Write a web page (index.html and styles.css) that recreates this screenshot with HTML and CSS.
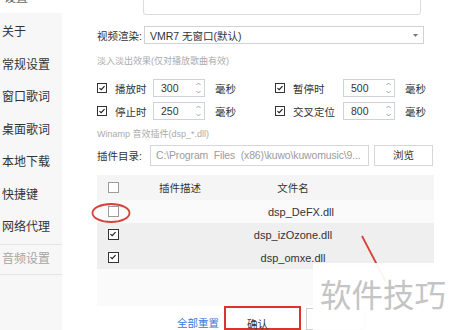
FILE: index.html
```html
<!DOCTYPE html>
<html lang="zh-CN">
<head>
	<meta charset="utf-8" />
	<title>音频设置</title>
	<link rel="stylesheet" href="styles.css">
</head>
<body>
	<div class="page">
		<aside class="sidebar">
			<div class="sidebar-title"><span>设置</span></div>
			<nav class="menu">
				<div class="menu-item">关于</div>
				<div class="menu-item">常规设置</div>
				<div class="menu-item">窗口歌词</div>
				<div class="menu-item">桌面歌词</div>
				<div class="menu-item">本地下载</div>
				<div class="menu-item">快捷键</div>
				<div class="menu-item">网络代理</div>
				<div class="menu-item menu-item--current">音频设置</div>
			</nav>
		</aside>

		<main class="panel">
			<div class="stub"></div>

			<div class="render-row">
				<span class="label">视频渲染:</span>
				<div class="select">
					<span>VMR7 无窗口(默认)</span>
					<svg class="select-arrow" width="5" height="3" viewBox="0 0 5 3"><path d="M0 0 H5 L2.5 3 Z" fill="#777"/></svg>
				</div>
			</div>

			<p class="note note--fade">淡入淡出效果(仅对播放歌曲有效)</p>

			<div class="fade-grid">
				<div class="fade-item">
					<span class="check check--on"><svg viewBox="0 0 10 10"><path d="M1.8 5.2 L4 7.2 L8.2 2.6" /></svg></span>
					<span class="fade-label">播放时</span>
					<span class="spin">300<svg class="spin-arrows" width="5" height="12" viewBox="0 0 5 12"><path d="M0.5 3 L2.5 1 L4.5 3 M0.5 9 L2.5 11 L4.5 9" /></svg></span>
					<span class="unit">毫秒</span>
				</div>
				<div class="fade-item">
					<span class="check check--on"><svg viewBox="0 0 10 10"><path d="M1.8 5.2 L4 7.2 L8.2 2.6" /></svg></span>
					<span class="fade-label fade-label--wide">暂停时</span>
					<span class="spin">500<svg class="spin-arrows" width="5" height="12" viewBox="0 0 5 12"><path d="M0.5 3 L2.5 1 L4.5 3 M0.5 9 L2.5 11 L4.5 9" /></svg></span>
					<span class="unit">毫秒</span>
				</div>
				<div class="fade-item">
					<span class="check check--on"><svg viewBox="0 0 10 10"><path d="M1.8 5.2 L4 7.2 L8.2 2.6" /></svg></span>
					<span class="fade-label">停止时</span>
					<span class="spin">250<svg class="spin-arrows" width="5" height="12" viewBox="0 0 5 12"><path d="M0.5 3 L2.5 1 L4.5 3 M0.5 9 L2.5 11 L4.5 9" /></svg></span>
					<span class="unit">毫秒</span>
				</div>
				<div class="fade-item">
					<span class="check check--on"><svg viewBox="0 0 10 10"><path d="M1.8 5.2 L4 7.2 L8.2 2.6" /></svg></span>
					<span class="fade-label fade-label--wide">交叉定位</span>
					<span class="spin">800<svg class="spin-arrows" width="5" height="12" viewBox="0 0 5 12"><path d="M0.5 3 L2.5 1 L4.5 3 M0.5 9 L2.5 11 L4.5 9" /></svg></span>
					<span class="unit">毫秒</span>
				</div>
			</div>

			<p class="note note--winamp">Winamp 音效插件(dsp_*.dll)</p>

			<div class="dir-row">
				<span class="label label--dir">插件目录:</span>
				<div class="path">C:\Program  Files  (x86)\kuwo\kuwomusic\9...</div>
				<div class="button">浏览</div>
			</div>

			<div class="plugins">
				<div class="plugins-row plugins-head">
					<span class="cell-check"><span class="check"></span></span>
					<span class="cell-desc">插件描述</span>
					<span class="cell-file">文件名</span>
				</div>
				<div class="plugins-row">
					<span class="cell-check"><span class="check"></span></span>
					<span class="cell-desc"></span>
					<span class="cell-file cell-file--shifted">dsp_DeFX.dll</span>
				</div>
				<div class="plugins-row plugins-row--on">
					<span class="cell-check"><span class="check check--on"><svg viewBox="0 0 10 10"><path d="M1.8 5.2 L4 7.2 L8.2 2.6" /></svg></span></span>
					<span class="cell-desc"></span>
					<span class="cell-file">dsp_izOzone.dll</span>
				</div>
				<div class="plugins-row plugins-row--on">
					<span class="cell-check"><span class="check check--on"><svg viewBox="0 0 10 10"><path d="M1.8 5.2 L4 7.2 L8.2 2.6" /></svg></span></span>
					<span class="cell-desc"></span>
					<span class="cell-file">dsp_omxe.dll</span>
				</div>
			</div>

			<div class="actions">
				<a class="reset" href="#">全部重置</a>
				<div class="confirm-mark"><span>确认</span></div>
				<div class="cancel"></div>
			</div>
		</main>
	</div>

	<!-- red annotations drawn over the dialog -->
	<svg class="marks" width="450" height="330" viewBox="0 0 450 330">
		<ellipse cx="111" cy="213" rx="18.5" ry="9" />
		<path d="M362 236 L386 282" />
	</svg>

	<div class="watermark">软件技巧</div>
</body>
</html>
```

FILE: styles.css
```css
* {
	box-sizing: border-box;
}
html, body {
	margin: 0;
}
body {
	position: relative;
	width: 450px;
	height: 330px;
	overflow: hidden;
	background: #fff;
	font-family: "Liberation Sans", "Noto Sans CJK SC", sans-serif;
	font-size: 10.5px;
	color: #333;
}
.page {
	display: flex;
	height: 100%;
}

/* left menu */
.sidebar {
	display: flex;
	flex-direction: column;
	flex-shrink: 0;
	width: 62px;
}
.sidebar-title {
	height: 13px;
}
.sidebar-title span {
	display: block;
	margin-top: -8px;
	padding-left: 4px;
	line-height: 12px;
	font-size: 12px;
	color: #666;
}
.menu {
	flex: 1;
	padding-top: 3px;
	background: #f7f7f7;
}
.menu-item {
	height: 32.5px;
	padding-left: 2px;
	line-height: 32.5px;
	font-size: 12px;
	color: #333;
}
.menu-item--current {
	height: 31px;
	line-height: 29px;
	border-top: 1px solid #e4e4e4;
	border-bottom: 1px solid #e4e4e4;
	color: #a5a5a5;
}

/* right panel */
.panel {
	display: flex;
	flex-direction: column;
	flex: 1;
	padding: 0 16px 0 35px;
}
.stub {
	width: 278px;
	height: 22px;
	margin: -6px 0 0 46px;
	border: 1px solid #dcdcdc;
	border-radius: 3px;
}
.render-row {
	display: flex;
	align-items: center;
	margin-top: 11px;
}
.label {
	width: 47px;
	white-space: nowrap;
}
.label--dir {
	width: 53px;
}
.select {
	display: flex;
	align-items: center;
	justify-content: space-between;
	width: 280px;
	height: 18px;
	padding: 0 5px 0 5px;
	border: 1px solid #d2d2d2;
}
.note {
	margin: 10px 0 0;
	line-height: 14px;
	font-size: 9px;
	color: #ababab;
}
.note--winamp {
	margin-top: 7px;
}

/* fade in / out */
.fade-grid {
	display: grid;
	grid-template-columns: 178px auto;
	row-gap: 5px;
	margin-top: 11px;
}
.fade-item {
	display: flex;
	align-items: center;
	height: 18px;
}
.fade-item .check {
	margin-right: 8px;
}
.fade-label {
	width: 38px;
	white-space: nowrap;
}
.fade-label--wide {
	width: 50px;
}
.spin {
	display: flex;
	align-items: center;
	justify-content: space-between;
	width: 52px;
	height: 18px;
	padding: 0 3px 0 7px;
	border: 1px solid #cdd3da;
}
.spin-arrows path {
	fill: none;
	stroke: #9a9a9a;
	stroke-width: 0.9;
}
.unit {
	margin-left: 10px;
}

/* checkbox */
.check {
	display: inline-flex;
	flex-shrink: 0;
	width: 10px;
	height: 10px;
	border: 1px solid #9c9c9c;
	background: #fff;
}
.check--on {
	border-color: #333;
}
.check svg {
	width: 8px;
	height: 8px;
}
.check svg path {
	fill: none;
	stroke: #222;
	stroke-width: 1.5;
}

/* plugin folder */
.dir-row {
	display: flex;
	align-items: center;
	margin-top: 4px;
}
.path {
	width: 219px;
	height: 21px;
	padding-left: 5px;
	line-height: 19px;
	border: 1px solid #d6d6d6;
	white-space: pre;
	overflow: hidden;
	font-size: 10.4px;
	letter-spacing: -0.1px;
	color: #9c9c9c;
}
.button {
	width: 59px;
	height: 21px;
	margin-left: 5px;
	line-height: 19px;
	text-align: center;
	border: 1px solid #d6d6d6;
}

/* plugin table */
.plugins {
	width: 337px;
	height: 136px;
	margin-top: 9px;
	background: #fafafa;
}
.plugins-row {
	display: grid;
	grid-template-columns: 62px 88px 92px 1fr;
	align-items: center;
	height: 23px;
	font-size: 11px;
}
.plugins-head {
	height: 25px;
	background: #f5f5f5;
	font-size: 10.5px;
}
.plugins-row--on {
	background: #efefef;
}
.cell-check {
	display: flex;
	padding-left: 11px;
}
.cell-check .check {
	width: 11px;
	height: 11px;
}
.cell-file {
	text-align: center;
	white-space: nowrap;
}
.cell-file--shifted {
	padding-left: 16px;
}

/* buttons */
.actions {
	display: flex;
	align-items: flex-start;
	padding-left: 80px;
}
.reset {
	margin-top: 9px;
	color: #3a78d6;
	text-decoration: none;
}
.confirm-mark {
	width: 77px;
	height: 24px;
	margin-left: 5px;
	padding: 8px 0 0 21px;
	border: 2px solid #d9342f;
}
.cancel {
	width: 60px;
	height: 22px;
	margin: 2px 0 0 5px;
	border: 1px solid #cfcfcf;
}

/* overlays */
.marks {
	position: absolute;
	left: 0;
	top: 0;
	pointer-events: none;
}
.marks ellipse,
.marks path {
	fill: none;
	stroke: #d8413a;
	stroke-width: 1.8;
}
.watermark {
	position: absolute;
	left: 313px;
	top: 263px;
	width: 137px;
	height: 67px;
	padding: 12px 0 0 7px;
	background: rgba(255, 255, 255, 0.94);
	line-height: 36px;
	font-family: "Noto Sans CJK SC", sans-serif;
	font-size: 31.5px;
	color: #c4c4c4;
	white-space: nowrap;
}
```
